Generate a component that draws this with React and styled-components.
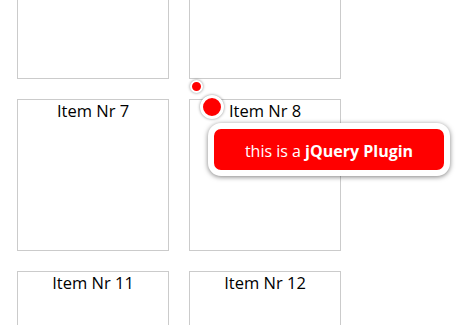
import React, { useLayoutEffect, useRef } from "react";
import styled, { createGlobalStyle } from "styled-components";

const GlobalStyle = createGlobalStyle`
  html, body {
    margin: 0;
    padding: 0;
    background: #fff;
  }
  body {
    font-family: "Open Sans", Lato, "Liberation Sans", sans-serif;
    color: #000;
  }
`;

// only the first two columns of the list are shown; the top row's
// titles are scrolled out of view so they are left empty
const items = [
  { id: 3, title: "" },
  { id: 4, title: "" },
  { id: 7, title: "Item Nr 7" },
  { id: 8, title: "Item Nr 8", tip: true },
  { id: 11, title: "Item Nr 11" },
  { id: 12, title: "Item Nr 12" },
];

export default function App() {
  const viewRef = useRef(null);

  useLayoutEffect(() => {
    // page scrolled down: the first row is half gone
    if (viewRef.current) viewRef.current.scrollTop = 90;
  }, []);

  return (
    <>
      <GlobalStyle />
      <Viewport ref={viewRef}>
        <ItemGrid>
          {items.map((item) => (
            <Item key={item.id}>
              {item.title && <ItemTitle>{item.title}</ItemTitle>}
              {item.tip && (
                <Tooltip>
                  <Dot size="small" />
                  <Dot size="big" />
                  <Bubble>
                    this is a <strong>jQuery Plugin</strong>
                  </Bubble>
                </Tooltip>
              )}
            </Item>
          ))}
        </ItemGrid>
      </Viewport>
    </>
  );
}

const Viewport = styled.div`
  width: 476px;
  height: 325px;
  overflow: hidden;
`;

const ItemGrid = styled.div`
  display: grid;
  grid-template-columns: repeat(2, 152px);
  gap: 20px;
  width: max-content;
  padding: 17px 17px 20px;
`;

const Item = styled.div`
  position: relative;
  box-sizing: border-box;
  width: 152px;
  height: 152px;
  border: 1px solid #cbcbcb;
  text-align: center;
`;

const ItemTitle = styled.div`
  font-size: 16.5px;
  line-height: 22px;
`;

const Tooltip = styled.div`
  position: absolute;
  left: 0;
  top: 0;
  z-index: 5;
`;

const Dot = styled.span`
  position: absolute;
  box-sizing: border-box;
  border-radius: 50%;
  background: #ff0000;
  border: ${({ size }) => (size === "big" ? "3px" : "2px")} solid #fff;
  box-shadow: 0 0 3px rgba(0, 0, 0, 0.45);
  width: ${({ size }) => (size === "big" ? "24px" : "13px")};
  height: ${({ size }) => (size === "big" ? "24px" : "13px")};
  left: ${({ size }) => (size === "big" ? "10px" : "0px")};
  top: ${({ size }) => (size === "big" ? "-5px" : "-20px")};
`;

const Bubble = styled.div`
  position: absolute;
  left: 18px;
  top: 23px;
  box-sizing: border-box;
  width: 242px;
  height: 53px;
  display: flex;
  align-items: center;
  justify-content: center;
  padding-top: 2px;
  background: #ff0000;
  color: #fff;
  border: 6px solid #fff;
  border-radius: 13px;
  box-shadow: 0 1px 5px rgba(0, 0, 0, 0.5);
  font-size: 16px;
  white-space: pre;

  strong {
    font-weight: 700;
  }
`;
